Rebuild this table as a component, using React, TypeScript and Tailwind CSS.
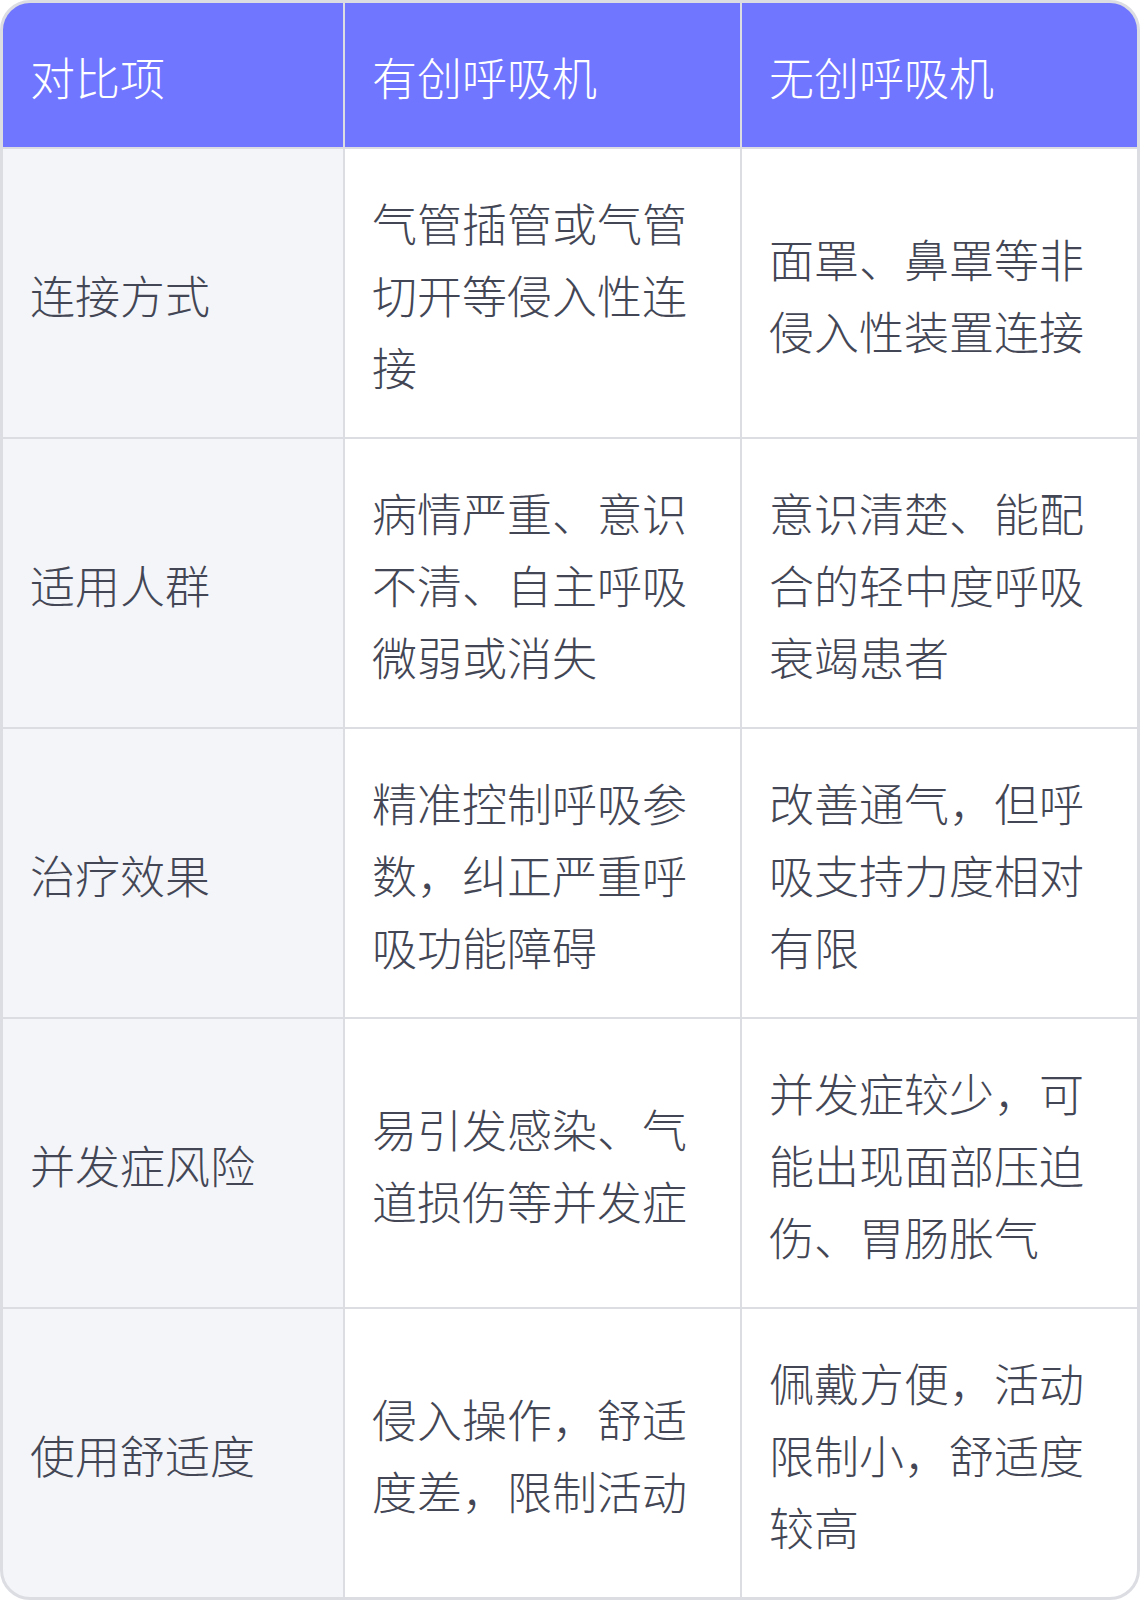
const rows: [string, string, string][] = [
  ["连接方式", "气管插管或气管切开等侵入性连接", "面罩、鼻罩等非侵入性装置连接"],
  ["适用人群", "病情严重、意识不清、自主呼吸微弱或消失", "意识清楚、能配合的轻中度呼吸衰竭患者"],
  ["治疗效果", "精准控制呼吸参数，纠正严重呼吸功能障碍", "改善通气，但呼吸支持力度相对有限"],
  ["并发症风险", "易引发感染、气道损伤等并发症", "并发症较少，可能出现面部压迫伤、胃肠胀气"],
  ["使用舒适度", "侵入操作，舒适度差，限制活动", "佩戴方便，活动限制小，舒适度较高"],
]

const headers = ["对比项", "有创呼吸机", "无创呼吸机"]

export default function App() {
  return (
    <div
      className="w-[1140px] h-[1600px] bg-white"
      style={{ fontFamily: '"Noto Sans CJK SC", "Noto Sans", sans-serif' }}
    >
      <div className="w-full h-full rounded-[30px] border-[3px] border-[#dcdde3] bg-[#dcdde3] overflow-hidden">
        <div className="grid grid-cols-[340px_395px_395px] grid-rows-[144px_repeat(5,288px)] gap-[2px] text-[45px] leading-[72px] font-light">
          {headers.map((h) => (
            <div key={h} className="flex items-center bg-[#7076ff] px-[27px] pt-[4px] text-white">
              {h}
            </div>
          ))}
          {rows.map(([label, a, b]) => (
            <div key={label} className="contents">
              <div className="flex items-center bg-[#f4f5f9] px-[27px] pt-[4px] text-[#434654]">{label}</div>
              <div className="flex items-center bg-white px-[27px] pt-[4px] text-[#434654]">{a}</div>
              <div className="flex items-center bg-white px-[27px] pt-[4px] text-[#434654]">{b}</div>
            </div>
          ))}
        </div>
      </div>
    </div>
  )
}
